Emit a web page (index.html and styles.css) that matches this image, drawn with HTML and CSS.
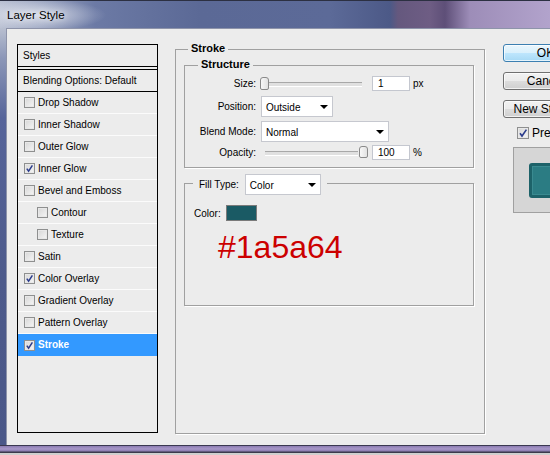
FILE: index.html
```html
<!DOCTYPE html>
<html>
<head>
<meta charset="utf-8">
<title>Layer Style</title>
<link rel="stylesheet" href="styles.css">
</head>
<body>
<div class="window">
  <div class="titlebar"><span class="title">Layer Style</span></div>
  <div class="middle">
    <div class="left-frame"></div>
    <div class="client">
      <div class="styles-list">
        <div class="list-head">Styles</div>
        <div class="list-blend">Blending Options: Default</div>
        <div class="row"><span class="cb"></span>Drop Shadow</div>
        <div class="row"><span class="cb"></span>Inner Shadow</div>
        <div class="row"><span class="cb"></span>Outer Glow</div>
        <div class="row"><span class="cb"><svg viewBox="0 0 9 9" width="9" height="9"><path d="M1.8 4.6 3.6 7.2 7.4 1.4" fill="none" stroke="#2b3c8c" stroke-width="1.5"/></svg></span>Inner Glow</div>
        <div class="row"><span class="cb"></span>Bevel and Emboss</div>
        <div class="row sub"><span class="cb"></span>Contour</div>
        <div class="row sub"><span class="cb"></span>Texture</div>
        <div class="row"><span class="cb"></span>Satin</div>
        <div class="row"><span class="cb"><svg viewBox="0 0 9 9" width="9" height="9"><path d="M1.8 4.6 3.6 7.2 7.4 1.4" fill="none" stroke="#2b3c8c" stroke-width="1.5"/></svg></span>Color Overlay</div>
        <div class="row"><span class="cb"></span>Gradient Overlay</div>
        <div class="row"><span class="cb"></span>Pattern Overlay</div>
        <div class="row selected"><span class="cb"><svg viewBox="0 0 9 9" width="9" height="9"><path d="M1.8 4.6 3.6 7.2 7.4 1.4" fill="none" stroke="#2b3c8c" stroke-width="1.5"/></svg></span>Stroke</div>
      </div>

      <div class="group stroke">
        <div class="legend stroke-legend">Stroke</div>
        <div class="group structure">
          <div class="legend structure-legend">Structure</div>
          <div class="srow r-size">
            <span class="label">Size:</span>
            <div class="slider"><span class="thumb"></span></div>
            <div class="num">1</div>
            <span class="unit">px</span>
          </div>
          <div class="srow r-pos">
            <span class="label">Position:</span>
            <div class="select w-pos"><span>Outside</span><i class="arrow"></i></div>
          </div>
          <div class="srow r-blend">
            <span class="label">Blend Mode:</span>
            <div class="select w-blend"><span>Normal</span><i class="arrow"></i></div>
          </div>
          <div class="srow r-op">
            <span class="label">Opacity:</span>
            <div class="slider op"><span class="thumb"></span></div>
            <div class="num">100</div>
            <span class="unit">%</span>
          </div>
        </div>
        <div class="group fill">
          <div class="fill-legend">
            <span>Fill Type:</span>
            <div class="select w-fill"><span>Color</span><i class="arrow"></i></div>
          </div>
          <div class="color-row">
            <span>Color:</span>
            <span class="swatch"></span>
          </div>
          <div class="hex">#1a5a64</div>
        </div>
      </div>

      <div class="side">
        <div class="btn default">OK</div>
        <div class="btn">Cancel</div>
        <div class="btn">New Style...</div>
        <div class="preview-row"><span class="cb big"><svg viewBox="0 0 10 10" width="10" height="10"><path d="M2 5.2 4 8 8.4 1.6" fill="none" stroke="#2b3c8c" stroke-width="1.6"/></svg></span><span>Preview</span></div>
        <div class="preview-box"><div class="preview-sq"></div></div>
      </div>
    </div>
  </div>
  <div class="bottom-frame"></div>
</div>
</body>
</html>
```
FILE: styles.css
```css
* { box-sizing: border-box; }
body {
  margin: 0;
  width: 550px;
  height: 455px;
  overflow: hidden;
  background: #3a3a48;
  font-family: "Liberation Sans", Arial, sans-serif;
  font-size: 10px;
  color: #000;
}
.window {
  width: 560px;
  height: 455px;
  display: flex;
  flex-direction: column;
}
.titlebar {
  height: 28px;
  flex: none;
  border-top: 1px solid #2c3042;
  background:
    radial-gradient(ellipse 70px 16px at 36px 14px, rgba(235,238,245,0.75), rgba(235,238,245,0) 100%),
    linear-gradient(90deg, #b9c0d2 0, #9aa4c0 40px, #6c7aa5 95px, #5b6996 200px, #5c6a98 330px, #4c5987 390px, #65587e 398px, #6e5d84 430px, #5e4f78 445px, #9d8db8 470px, #b2a3cc 550px);
  display: flex;
  align-items: center;
  padding-left: 7px;
}
.title {
  font-size: 11.5px;
  color: #000;
  text-shadow: 0 0 6px rgba(255,255,255,0.9);
}
.middle {
  height: 417px;
  flex: none;
  display: flex;
}
.left-frame {
  width: 6px;
  flex: none;
  background: linear-gradient(180deg, #b8bfd0 0, #8c97b8 30px, #56649a 90px, #4d5a8b 250px, #4a5788 100%);
}
.client {
  flex: 1;
  background: #ececec;
  border-top: 1px solid #8e94aa;
  border-left: 1px solid #8e94aa;
  display: flex;
  align-items: flex-start;
  padding: 15px 0 0 10px;
}
.bottom-frame {
  height: 10px;
  flex: none;
  background: linear-gradient(180deg, #3a3850 0, #3a3850 1px, #8c7cb2 1px, #a898c8 4px, #8a7ab0 6px, #3c3a4c 7px, #3c3a4c 8px, #cfcfcf 8px, #cfcfcf 10px);
}

/* Styles list */
.styles-list {
  width: 141px;
  height: 389px;
  flex: none;
  border: 1px solid #000;
  display: flex;
  flex-direction: column;
}
.list-head {
  height: 22px;
  border-bottom: 1px solid #000;
  padding: 0 0 1px 5px;
  display: flex;
  align-items: center;
}
.list-blend {
  height: 23px;
  margin-top: 2px;
  border-top: 1px solid #000;
  border-bottom: 1px solid #000;
  padding: 0 0 1px 5px;
  display: flex;
  align-items: center;
}
.row {
  height: 22px;
  border-bottom: 1px solid #fbfbfb;
  padding: 0 0 1px 6px;
  display: flex;
  align-items: center;
}
.row .cb { margin-top: 1px; }
.row.sub { padding-left: 19px; }
.row.selected {
  background: #3399ff;
  color: #fff;
  font-weight: bold;
  border-bottom: none;
}
.cb {
  width: 11px;
  height: 11px;
  flex: none;
  border: 1px solid #8e8f8f;
  background: linear-gradient(135deg, #d6d6d6, #f6f6f6);
  box-shadow: inset 0 0 0 1px #e8e8e8;
  margin-right: 3px;
  display: flex;
  align-items: center;
  justify-content: center;
}
.cb svg { display: block; }
.cb.big { width: 12px; height: 12px; }

/* Groups */
.group {
  border: 1px solid #a0a0a0;
  box-shadow: 1px 1px 0 #fff;
  position: relative;
}
.legend {
  position: absolute;
  background: #ececec;
  font-weight: bold;
  font-size: 11px;
  line-height: 13px;
  padding: 0 3px;
}
.stroke {
  width: 310px;
  height: 385px;
  flex: none;
  margin: 5px 0 0 17px;
  padding: 15px 10px 0 8px;
}
.stroke-legend { top: -8px; left: 12px; }
.structure {
  height: 103px;
  display: flex;
  flex-direction: column;
}
.structure-legend { top: -8px; left: 13px; }
.srow {
  display: flex;
  align-items: center;
}
.r-size { margin-top: 10px; height: 15px; }
.r-pos { margin-top: 5px; height: 21px; }
.r-blend { margin-top: 4px; height: 21px; }
.r-op { margin-top: 3px; height: 15px; }
.label {
  width: 71px;
  flex: none;
  text-align: right;
  margin-right: 5px;
}
.slider {
  position: relative;
  width: 101px;
  height: 15px;
  flex: none;
  margin-right: 10px;
}
.slider::before {
  content: "";
  position: absolute;
  left: 2px;
  right: 0;
  top: 6px;
  height: 3px;
  border-top: 1px solid #a8a8a8;
  border-bottom: 1px solid #fff;
  background: #e0e0e0;
}
.slider.op {
  width: 97px;
  margin-left: 4px;
}
.slider.op::before { left: 0; right: 4px; }
.thumb {
  position: absolute;
  top: 1px;
  left: -1px;
  width: 9px;
  height: 13px;
  border: 1px solid #8a8a8a;
  border-radius: 3px 3px 2px 2px;
  background: linear-gradient(90deg, #f8f8f8, #e2e2e2);
  z-index: 1;
}
.slider.op .thumb { left: 94px; top: 1px; height: 12px; }
.num {
  width: 38px;
  height: 15px;
  flex: none;
  border: 1px solid #c4c7cf;
  background: #fff;
  padding-left: 5px;
  display: flex;
  align-items: center;
}
.unit { margin-left: 3px; }
.select {
  height: 21px;
  flex: none;
  border: 1px solid #c6c8cf;
  background: #fff;
  display: flex;
  align-items: center;
  justify-content: space-between;
  padding: 1px 4px 0 4px;
}
.w-pos { width: 72px; }
.w-blend { width: 128px; }
.w-fill { width: 76px; margin-left: 6px; }
.arrow {
  width: 0;
  height: 0;
  border-left: 4px solid transparent;
  border-right: 4px solid transparent;
  border-top: 4px solid #000;
  margin-top: -1px;
}
.fill {
  height: 123px;
  margin-top: 15px;
}
.fill-legend {
  position: absolute;
  top: -10px;
  left: 8px;
  padding: 0 6px;
  background: #ececec;
  display: flex;
  align-items: center;
}
.color-row {
  margin-top: 21px;
  padding-left: 9px;
  display: flex;
  align-items: center;
  height: 16px;
}
.swatch {
  width: 31px;
  height: 16px;
  margin-left: 5px;
  border: 1px solid #7a7a7a;
  background: #1a5a64;
}
.hex {
  margin: 8px 0 0 33px;
  font-size: 32px;
  line-height: 36px;
  color: #cc0000;
}

/* Side buttons */
.side {
  margin-left: 18px;
  width: 90px;
  flex: none;
  display: flex;
  flex-direction: column;
}
.btn {
  width: 85px;
  height: 18px;
  margin-bottom: 10px;
  border: 1px solid #707070;
  border-radius: 3px;
  background: linear-gradient(180deg, #f2f2f2 0, #ebebeb 50%, #dddddd 50%, #cfcfcf 100%);
  box-shadow: inset 0 0 0 1px rgba(255,255,255,0.7);
  font-size: 12px;
  display: flex;
  align-items: center;
  justify-content: center;
}
.btn.default {
  border-color: #3c7fb1;
  background: linear-gradient(180deg, #eaf6fd 0, #d9f0fc 50%, #bee6fd 50%, #a7d9f5 100%);
}
.preview-row {
  margin-top: -1px;
  padding-left: 14px;
  display: flex;
  align-items: center;
  height: 12px;
  font-size: 12px;
}
.preview-row .cb { margin-right: 3px; }
.preview-box {
  margin: 8px 0 0 10px;
  width: 75px;
  height: 66px;
  border: 1px solid #a0a0a0;
  background: #d6d6d6;
  padding: 15px 0 0 15px;
}
.preview-sq {
  width: 35px;
  height: 35px;
  border: 3px solid #1d6269;
  border-radius: 3px;
  background: #2b7c83;
  box-shadow: inset 0 0 0 1px #3a8a90;
}
```
